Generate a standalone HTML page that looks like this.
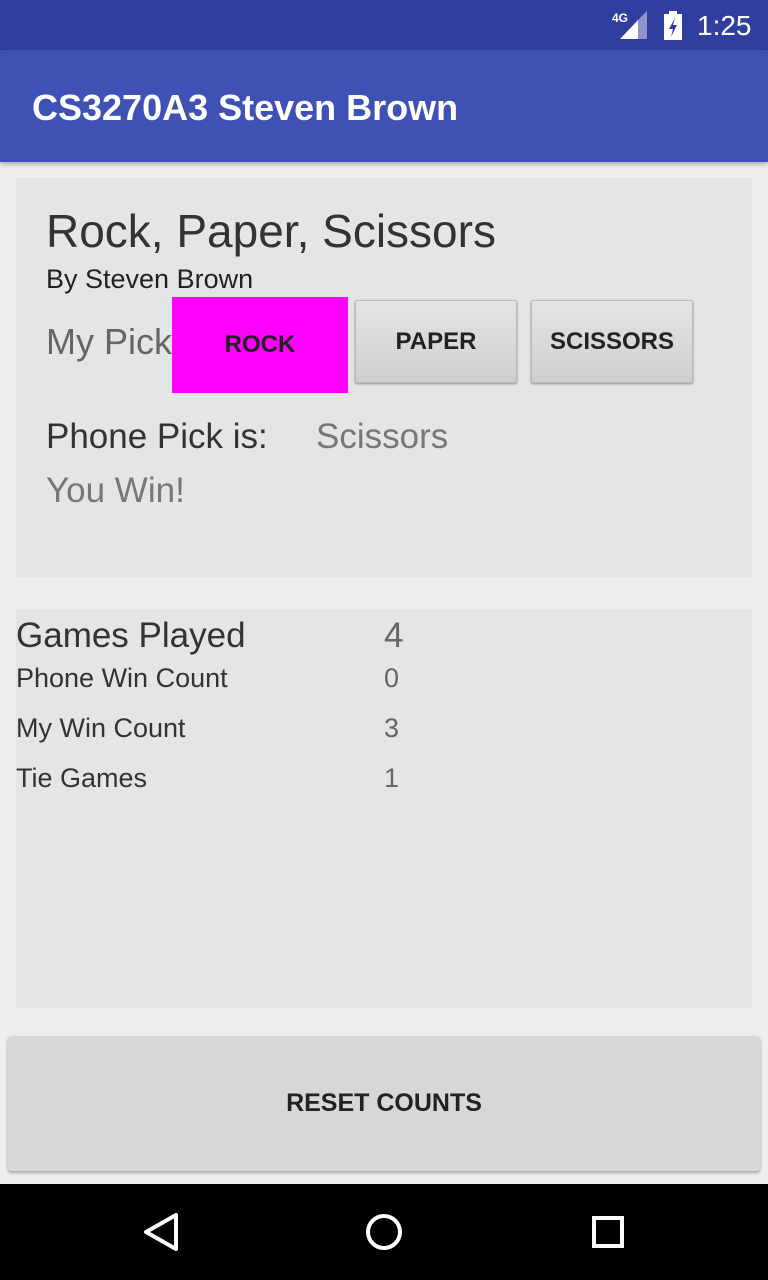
<!DOCTYPE html>
<html><head><style>
body{margin:0;width:768px;height:1280px;background:#eeeeee;font-family:"Liberation Sans",sans-serif;position:relative;overflow:hidden}
.a{position:absolute}
.t{white-space:nowrap}
.btn{position:absolute;background:linear-gradient(#e4e4e4,#cfcfcf);border:1px solid #bbb;border-radius:2px;box-shadow:0 1px 2px rgba(0,0,0,.4);font-size:24px;font-weight:bold;color:#222;display:flex;align-items:center;justify-content:center}
</style></head><body>
<div class="a" style="left:0;top:0;width:768px;height:50px;background:#303f9f"></div>
<svg class="a" style="left:610px;top:8px" width="40" height="32"><text x="2" y="14" font-size="12" font-weight="bold" fill="#fff" font-family="Liberation Sans">4G</text><polygon points="10,31 28,31 28,12" fill="#fff"/><polygon points="28,31 37,31 37,3 28,12" fill="#fff" opacity=".45"/></svg>
<svg class="a" style="left:663px;top:10px" width="22" height="30"><rect x="1" y="4" width="18" height="26" fill="#fff"/><rect x="6" y="1" width="8" height="4" fill="#fff"/><polygon points="12,8 6,19 10,19 8,27 14,15 10,15" fill="#303f9f"/></svg>
<div class="a t" style="left:697px;top:10px;font-size:28px;color:#fff">1:25</div>
<div class="a" style="left:0;top:50px;width:768px;height:112px;background:#3f51b5;box-shadow:0 2px 5px rgba(0,0,0,.3)"></div>
<div class="a t" style="left:32px;top:87px;font-size:36px;font-weight:bold;color:#fff">CS3270A3 Steven Brown</div>
<div class="a" style="left:16px;top:178px;width:736px;height:399px;background:#e5e5e5"></div>
<div class="a t" style="left:46px;top:204px;font-size:46px;color:#333">Rock, Paper, Scissors</div>
<div class="a t" style="left:46px;top:264px;font-size:27px;color:#222">By Steven Brown</div>
<div class="a t" style="left:46px;top:321px;font-size:36px;color:#666">My Pick</div>
<div class="a" style="left:172px;top:297px;width:176px;height:96px;background:#ff00ff;display:flex;align-items:center;justify-content:center;font-size:24px;font-weight:bold;color:#222">ROCK</div>
<div class="btn" style="left:355px;top:300px;width:160px;height:81px">PAPER</div>
<div class="btn" style="left:531px;top:300px;width:160px;height:81px">SCISSORS</div>
<div class="a t" style="left:46px;top:417px;font-size:35px;color:#333">Phone Pick is:</div>
<div class="a t" style="left:316px;top:417px;font-size:35px;color:#777">Scissors</div>
<div class="a t" style="left:46px;top:471px;font-size:35px;color:#777">You Win!</div>
<div class="a" style="left:16px;top:609px;width:736px;height:399px;background:#e5e5e5"></div>
<div class="a t" style="left:16px;top:616px;font-size:35px;color:#333">Games Played</div>
<div class="a t" style="left:384px;top:616px;font-size:35px;color:#666">4</div>
<div class="a t" style="left:16px;top:663px;font-size:27px;color:#333">Phone Win Count</div>
<div class="a t" style="left:384px;top:663px;font-size:27px;color:#666">0</div>
<div class="a t" style="left:16px;top:713px;font-size:27px;color:#333">My Win Count</div>
<div class="a t" style="left:384px;top:713px;font-size:27px;color:#666">3</div>
<div class="a t" style="left:16px;top:763px;font-size:27px;color:#333">Tie Games</div>
<div class="a t" style="left:384px;top:763px;font-size:27px;color:#666">1</div>
<div class="a" style="left:8px;top:1036px;width:752px;height:135px;background:#d6d7d7;border-radius:3px;box-shadow:0 2px 3px rgba(0,0,0,.3);display:flex;align-items:center;justify-content:center;font-size:25px;font-weight:bold;color:#222">RESET COUNTS</div>
<div class="a" style="left:0;top:1184px;width:768px;height:96px;background:#000"></div>
<svg class="a" style="left:0;top:1184px" width="768" height="96"><polygon points="176,31 176,65 146,48" fill="none" stroke="#fff" stroke-width="4" stroke-linejoin="round"/><circle cx="384" cy="48" r="16" fill="none" stroke="#fff" stroke-width="4"/><rect x="594" y="34" width="28" height="28" fill="none" stroke="#fff" stroke-width="4"/></svg>
</body></html>
